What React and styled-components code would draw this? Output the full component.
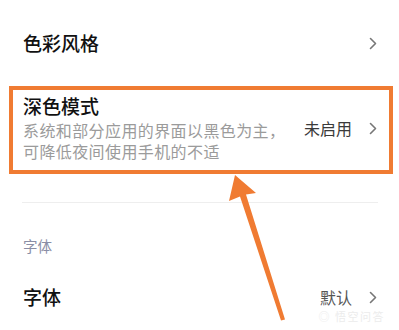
import React from "react";
import styled, { createGlobalStyle } from "styled-components";

const GlobalStyle = createGlobalStyle`
  html, body {
    margin: 0;
    padding: 0;
    background: #ffffff;
  }
  body {
    font-family: "Noto Sans CJK SC", "Noto Sans", sans-serif;
    color: #111;
  }
`;

const ORANGE = "#f07b32";

const Page = styled.div`
  position: relative;
  width: 399px;
  height: 330px;
  overflow: hidden;
  background: #fff;
`;

const Row = styled.div`
  display: flex;
  align-items: center;
  justify-content: space-between;
  height: ${(p) => p.$height}px;
  padding: 0 22px 0 23px;
`;

const Highlight = styled.div`
  display: flex;
  align-items: center;
  justify-content: space-between;
  margin: 0 6px 0 9px;
  border: 4px solid ${ORANGE};
  padding: 4px 12px 8px 10px;
`;

const TextBlock = styled.div`
  display: flex;
  flex-direction: column;
  gap: 2px;
`;

const Title = styled.div`
  font-size: 19px;
  line-height: 24px;
  font-weight: 500;
  color: #111;
`;

const Subtitle = styled.div`
  font-size: 16px;
  line-height: 21px;
  color: #9b9b9b;
  white-space: pre-line;
  letter-spacing: 0.4px;
`;

const Trailing = styled.div`
  display: flex;
  align-items: center;
  gap: 17px;
`;

const Value = styled.div`
  font-size: 16px;
  line-height: 18px;
  color: ${(p) => (p.$strong ? "#3a3a3a" : "#555")};
`;

const Divider = styled.div`
  height: 1px;
  background: #eeeeee;
  margin: 28px 21px 0 22px;
`;

const SectionHeader = styled.div`
  margin-top: 33px;
  padding-left: 23px;
  font-size: 14.5px;
  line-height: 20px;
  color: #8a8ea6;
`;

const Overlay = styled.svg`
  position: absolute;
  left: 0;
  top: 0;
  pointer-events: none;
`;

const Watermark = styled.div`
  position: absolute;
  right: 14px;
  bottom: 8px;
  font-size: 11px;
  line-height: 11px;
  color: #ececec;
  letter-spacing: 1.5px;
`;

const Chevron = () => (
  <svg width="8" height="13" viewBox="0 0 8 13">
    <path
      d="M1.5 1.5 L6.5 6.5 L1.5 11.5"
      fill="none"
      stroke="#777"
      strokeWidth="1.6"
      strokeLinecap="round"
      strokeLinejoin="round"
    />
  </svg>
);

const App = () => {
  return (
    <>
      <GlobalStyle />
      <Page>
        <Row $height={86}>
          <Title>色彩风格</Title>
          <Chevron />
        </Row>

        <Highlight>
          <TextBlock>
            <Title>深色模式</Title>
            <Subtitle>
              {"系统和部分应用的界面以黑色为主，\n可降低夜间使用手机的不适"}
            </Subtitle>
          </TextBlock>
          <Trailing>
            <Value $strong>未启用</Value>
            <Chevron />
          </Trailing>
        </Highlight>

        <Divider />
        <SectionHeader>字体</SectionHeader>

        <Row $height={82}>
          <Title>字体</Title>
          <Trailing>
            <Value>默认</Value>
            <Chevron />
          </Trailing>
        </Row>

        <Watermark>◎ 悟空问答</Watermark>

        <Overlay width="399" height="330" viewBox="0 0 399 330">
          <polygon
            points="235,175 256,193 246,194.5 285,319.5 281,320.5 240,196.5 229,201"
            fill={ORANGE}
          />
        </Overlay>
      </Page>
    </>
  );
};

export default App;
